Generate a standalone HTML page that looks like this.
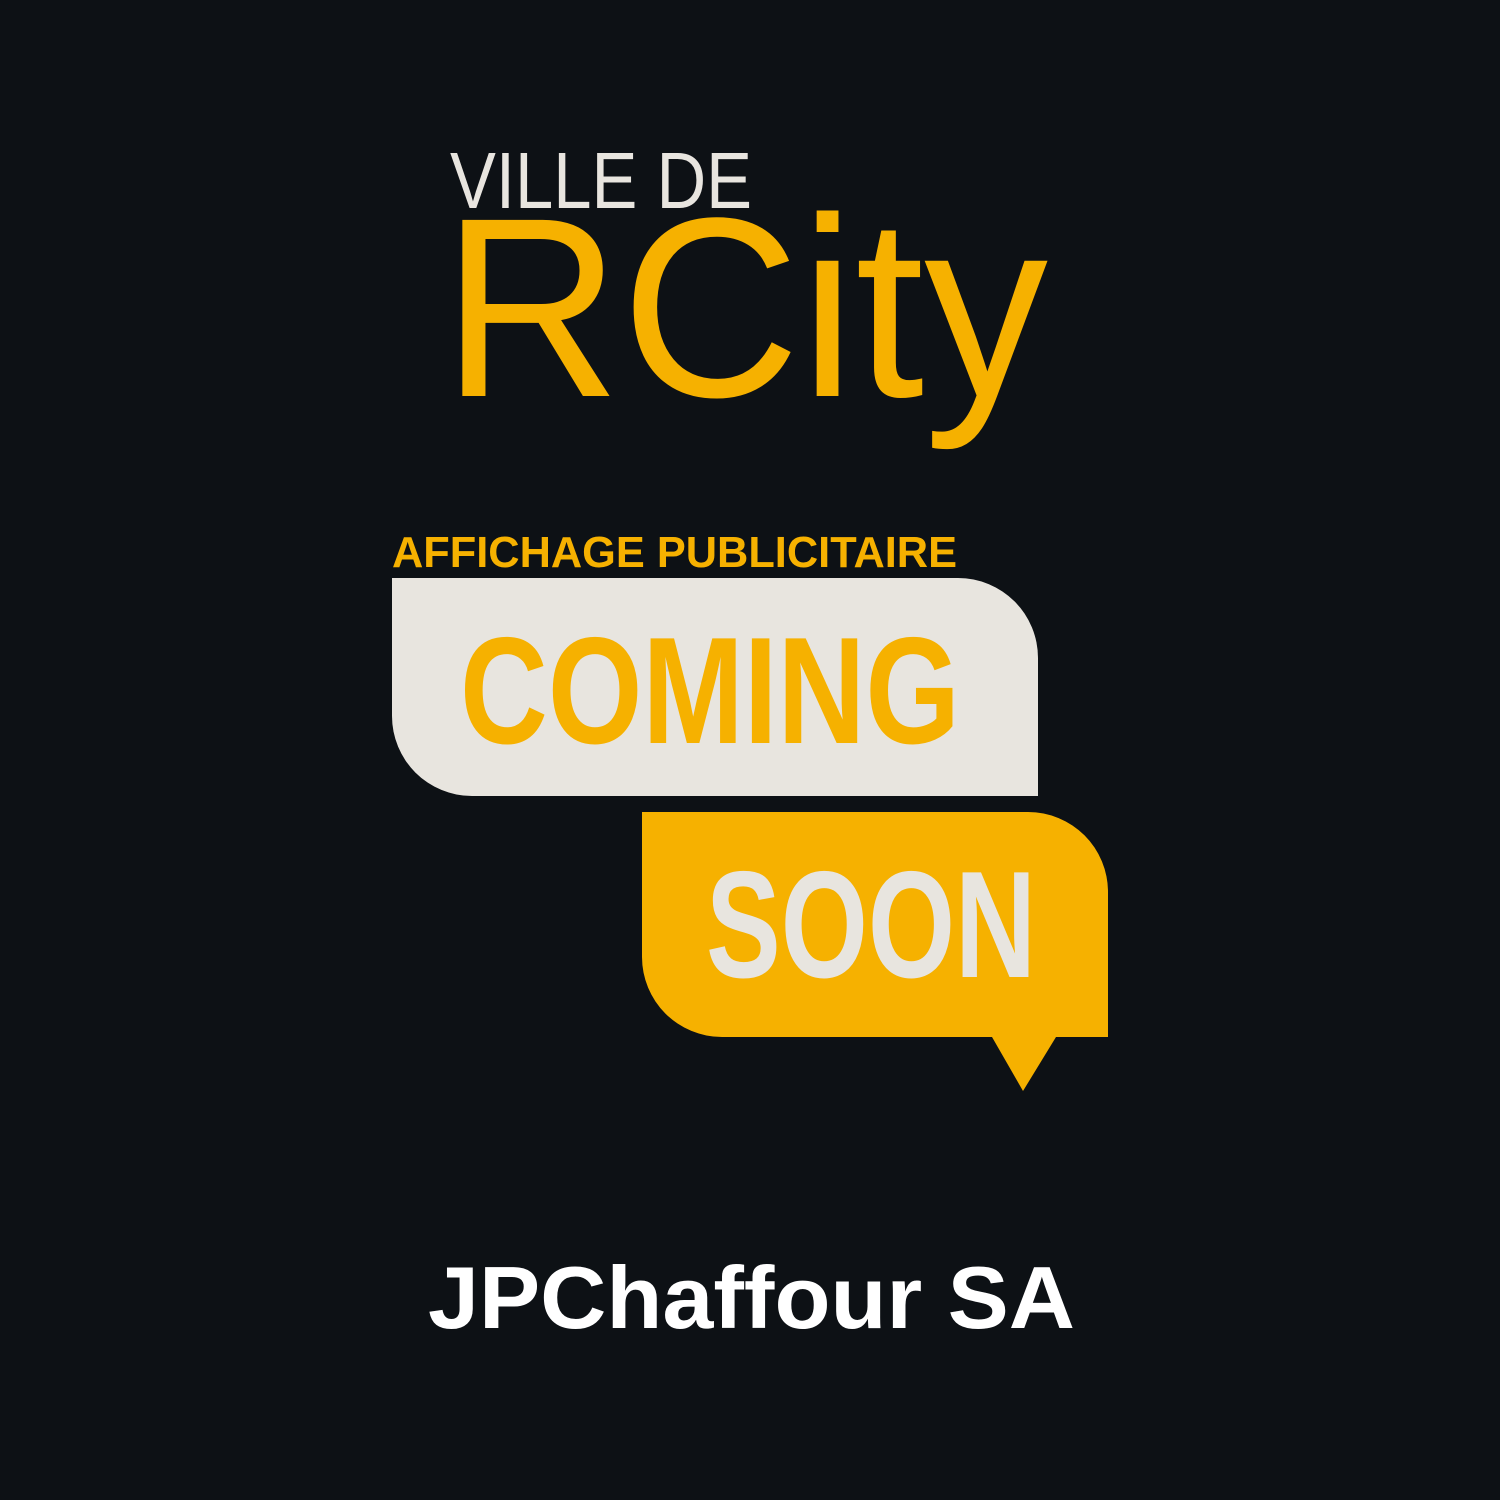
<!DOCTYPE html>
<html><head><meta charset="utf-8"><style>
html,body{margin:0;padding:0;background:#0d1115;}
svg{display:block}
</style></head><body>
<svg width="1500" height="1500" viewBox="0 0 1500 1500" xmlns="http://www.w3.org/2000/svg">
<rect width="1500" height="1500" fill="#0d1115"/>
<text x="450" y="208" font-family="Liberation Sans, sans-serif" font-size="80" fill="#e8e5df" textLength="302" lengthAdjust="spacingAndGlyphs">VILLE DE</text>
<text x="442" y="396" font-family="Liberation Sans, sans-serif" font-size="256" fill="#f6b100" textLength="606" lengthAdjust="spacingAndGlyphs">RCity</text>
<text x="392" y="567" font-family="Liberation Sans, sans-serif" font-weight="bold" font-size="44" fill="#f6b100" textLength="565" lengthAdjust="spacingAndGlyphs">AFFICHAGE PUBLICITAIRE</text>
<path d="M392 578 H958 A80 80 0 0 1 1038 658 V796 H472 A80 80 0 0 1 392 716 Z" fill="#e8e5df"/>
<text x="460" y="743" font-family="Liberation Sans Narrow, Liberation Sans, sans-serif" font-weight="bold" font-size="152" fill="#f6b100" textLength="500" lengthAdjust="spacingAndGlyphs">COMING</text>
<path d="M642 812 H1028 A80 80 0 0 1 1108 892 V1037 H1056 L1023 1091 L992 1037 H722 A80 80 0 0 1 642 957 Z" fill="#f6b100"/>
<text x="706" y="977" font-family="Liberation Sans Narrow, Liberation Sans, sans-serif" font-weight="bold" font-size="152" fill="#e8e5df" textLength="330" lengthAdjust="spacingAndGlyphs">SOON</text>
<text x="428" y="1328" font-family="Liberation Sans, sans-serif" font-weight="bold" font-size="88" fill="#ffffff" textLength="647" lengthAdjust="spacingAndGlyphs">JPChaffour SA</text>
</svg>
</body></html>
